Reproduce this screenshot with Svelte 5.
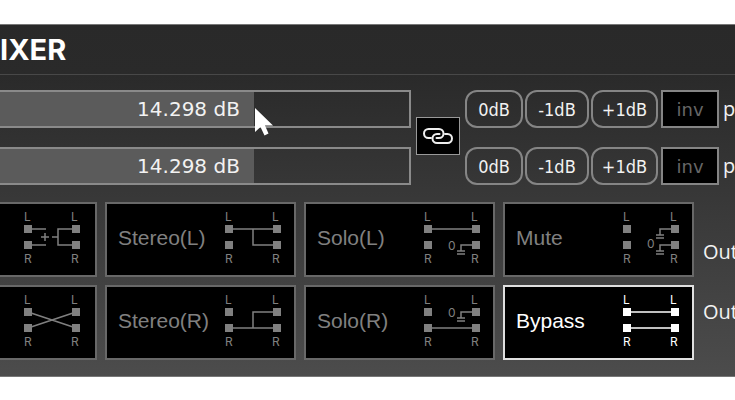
<script>
  let gains = $state([14.298, 14.298]);
  let linked = $state(true);
  let inverted = $state([false, false]);
  let active = $state('Bypass');

  const min = -48;
  const max = 48;
  const steps = ['0dB', '-1dB', '+1dB'];
  const channels = [0, 1];
  const fill = (v) => ((v - min) / (max - min)) * 100;

  // Wires start at the left port column (x 4) and end at the right one (x 52).
  const ground = (y) => `M52 ${y}H37V${y + 6}M33 ${y + 6}H41M33 ${y + 9}H41`;
  const modes = [
    { name: 'Mono', label: '', wires: 'M4 19H22M4 35H22M21 23V31M17 27H25M28 27H34M52 19H34V35H52' },
    { name: 'Stereo(L)', label: 'Stereo(L)', wires: 'M4 19H52M28 19V35H52' },
    { name: 'Solo(L)', label: 'Solo(L)', wires: 'M4 19H52' + ground(35), zero: 40 },
    { name: 'Mute', label: 'Mute', wires: ground(19) + ground(35), zero: 38 },
    { name: 'Swap', label: '', wires: 'M4 19L52 35M4 35L52 19' },
    { name: 'Stereo(R)', label: 'Stereo(R)', wires: 'M4 35H52M28 35V19H52' },
    { name: 'Solo(R)', label: 'Solo(R)', wires: ground(19) + 'M4 35H52', zero: 24 },
    { name: 'Bypass', label: 'Bypass', wires: 'M4 19H52M4 35H52' }
  ];

  function step(i, s) {
    setGain(i, s === '0dB' ? 0 : gains[i] + parseInt(s));
  }
  function setGain(i, v) {
    const value = Math.max(min, Math.min(max, v));
    if (linked) gains = [value, value];
    else gains[i] = value;
  }
</script>

<main class="panel">
  <header><h1>IXER</h1></header>

  <section class="levels">
    <div class="column sliders">
      {#each channels as i}
        <label class="slider">
          <input
            type="range"
            {min}
            {max}
            step="0.001"
            value={gains[i]}
            aria-label="Gain"
            style="--fill: {fill(gains[i])}%"
            oninput={(e) => setGain(i, +e.currentTarget.value)}
          />
          <span>{gains[i].toFixed(3)} dB</span>
          {#if i === 0}
            <svg class="pointer" style="left: {fill(gains[i])}%" width="20" height="30" viewBox="0 0 20 30">
              <path d="M0 0V24L5.500 19L9.500 27.500L13.500 25.500L10 17.500H18Z" fill="#fff" />
            </svg>
          {/if}
        </label>
      {/each}
    </div>

    <button class="link" aria-label="Link channels" aria-pressed={linked} onclick={() => (linked = !linked)}>
      <svg width="30" height="16" viewBox="0 0 30 16" fill="none" stroke="currentColor" stroke-width="2" stroke-linecap="round">
        <path d="M8 10H5.500a4.500 4.500 0 0 1 0-9H16a4.500 4.500 0 0 1 0 9H13.500" />
        <path d="M22 6H24.500a4.500 4.500 0 0 1 0 9H14a4.500 4.500 0 0 1 0-9H16.500" />
      </svg>
    </button>

    <div class="column">
      {#each channels as i}
        <div class="steps">
          {#each steps as s}
            <button class="step" onclick={() => step(i, s)}>{s}</button>
          {/each}
          <button class="inv" class:on={inverted[i]} aria-pressed={inverted[i]} onclick={() => (inverted[i] = !inverted[i])}>inv</button>
          <span class="pan">p</span>
        </div>
      {/each}
    </div>
  </section>

  <section class="routing">
    <div class="modes">
      {#each modes as m}
        <button class="mode" class:on={active === m.name} class:bare={!m.label} aria-label={m.name} aria-pressed={active === m.name} onclick={() => (active = m.name)}>
          <span>{m.label}</span>
          <svg width="58" height="60" viewBox="0 0 58 60">
            <path class="wire" d={m.wires} />
            <path class="port" d="M0 15h8v8H0zM48 15h8v8h-8zM0 31h8v8H0zM48 31h8v8h-8z" />
            <text x="0" y="11">L</text>
            <text x="47" y="11">L</text>
            <text x="0" y="53">R</text>
            <text x="47" y="53">R</text>
            {#if m.zero}<text x="24" y={m.zero}>0</text>{/if}
          </svg>
        </button>
      {/each}
    </div>
    <div class="outputs">
      <span>Out</span>
      <span>Out</span>
    </div>
  </section>
</main>

<style>
  :global(body) {
    margin: 0;
    background: #fff;
  }
  .panel {
    margin-top: 24px;
    box-sizing: border-box;
    padding-bottom: 16px;
    overflow: hidden;
    border-top: 1px solid #777;
    border-bottom: 1px solid #777;
    background: linear-gradient(#292929 0, #2a2a2a 50px, #4c4c4c 100%);
    color: #f2f2f2;
    font-family: 'Open Sans', sans-serif;
  }
  header {
    height: 49px;
    border-bottom: 1px solid #484848;
  }
  h1 {
    margin: 0;
    font: 700 29px/50px Inter, sans-serif;
    color: #fff;
  }
  button {
    box-sizing: border-box;
    margin: 0;
    padding: 0;
    cursor: default;
  }
  .levels {
    display: flex;
    align-items: flex-start;
    margin: 15px 0 0 -34px;
  }
  .column {
    display: flex;
    flex-direction: column;
    gap: 19px;
  }
  .sliders {
    flex: 1;
    min-width: 0;
  }
  .slider {
    position: relative;
    display: grid;
    height: 38px;
    font: 20px/38px 'DejaVu Sans', sans-serif;
  }
  .slider > input,
  .slider > span {
    grid-area: 1 / 1;
  }
  .slider span {
    place-self: center;
    pointer-events: none;
  }
  .pointer {
    position: absolute;
    top: 18px;
    z-index: 1;
    pointer-events: none;
  }
  input {
    appearance: none;
    box-sizing: border-box;
    width: 100%;
    height: 38px;
    margin: 0;
    border: 2px solid #8a8a8a;
    background: linear-gradient(90deg, #5b5b5b var(--fill), transparent var(--fill));
  }
  input::-webkit-slider-thumb {
    appearance: none;
    width: 1px;
    height: 34px;
    background: transparent;
  }
  .link {
    display: grid;
    place-items: center;
    width: 44px;
    height: 38px;
    margin: 27px 5px 0;
    border: 1px solid #999;
    background: #000;
    color: #eee;
  }
  .steps {
    display: flex;
    align-items: center;
    gap: 2px;
  }
  .step,
  .inv {
    width: 58px;
    height: 38px;
    border: 2px solid #858585;
    font: 18px/36px 'DejaVu Sans Condensed', 'DejaVu Sans', sans-serif;
  }
  .step {
    border-radius: 12px;
    background: transparent;
    color: #f2f2f2;
  }
  .step:nth-child(2) {
    width: 64px;
  }
  .step:nth-child(3) {
    width: 67px;
  }
  .inv {
    margin-left: 1px;
    background: #000;
    color: #666;
    font-family: 'DejaVu Sans', sans-serif;
  }
  .inv.on {
    color: #fff;
  }
  .pan {
    width: 12px;
    margin-left: 2px;
    font-size: 20px;
    line-height: 38px;
  }
  .routing {
    display: flex;
    gap: 9px;
    margin: 17px 0 0 -94px;
  }
  .modes {
    flex: 1;
    display: grid;
    grid-template-columns: repeat(4, 1fr);
    gap: 8px;
  }
  .mode {
    display: flex;
    justify-content: space-between;
    height: 75px;
    padding: 6px 11px 0;
    border: 2px solid #686868;
    background: #000;
    color: #808080;
    font: 21px/56px 'Liberation Sans', sans-serif;
  }
  .mode.bare {
    padding-right: 13px;
  }
  .mode.on {
    border-color: #e0e0e0;
    color: #fff;
  }
  .mode svg {
    overflow: visible;
  }
  .wire {
    fill: none;
    stroke: currentColor;
    stroke-width: 1.5;
  }
  .port,
  text {
    fill: currentColor;
  }
  text {
    font: 12px Inter, sans-serif;
  }
  .outputs {
    width: 32px;
    padding-top: 35px;
    font-size: 20px;
    line-height: 30px;
    display: flex;
    flex-direction: column;
    gap: 30px;
  }
</style>
